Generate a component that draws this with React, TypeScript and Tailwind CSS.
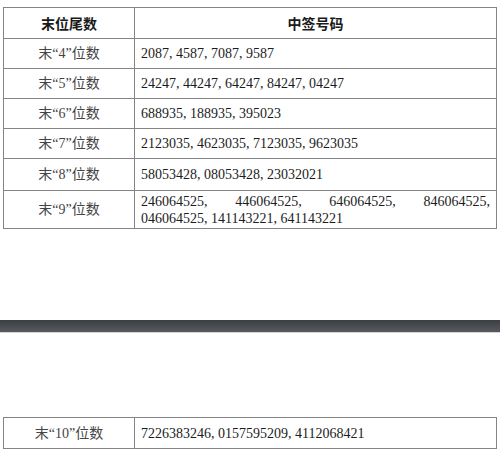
const rows: { label: string; nums: string; h: string }[] = [
  { label: '末“4”位数', nums: '2087, 4587, 7087, 9587', h: 'h-[30px]' },
  { label: '末“5”位数', nums: '24247, 44247, 64247, 84247, 04247', h: 'h-[30px]' },
  { label: '末“6”位数', nums: '688935, 188935, 395023', h: 'h-[30px]' },
  { label: '末“7”位数', nums: '2123035, 4623035, 7123035, 9623035', h: 'h-[30px]' },
  { label: '末“8”位数', nums: '58053428, 08053428, 23032021', h: 'h-[32px]' },
];

const serif = "font-['Liberation_Serif','Noto_Sans_CJK_SC',serif]";

function Row({ label, h, children, last }: { label: string; h: string; children: React.ReactNode; last?: boolean }) {
  return (
    <div className={`flex ${h} ${last ? '' : 'border-b border-[#858585]'}`}>
      <div className={`flex w-[131px] shrink-0 items-center justify-center border-r border-[#858585] text-[14px] text-[#444] ${serif}`}>
        {label}
      </div>
      <div className={`flex flex-1 items-center px-[6px] text-[14px] text-[#1c1c1c] ${serif}`}>{children}</div>
    </div>
  );
}

export default function App() {
  return (
    <div className="h-[450px] w-[500px] overflow-hidden bg-white">
      <div className="ml-[3px] mt-[7px] w-[494px] border border-[#858585]">
        <div className="flex h-[31px] border-b border-[#858585] font-['Noto_Sans_CJK_SC',sans-serif] text-[14px] font-bold text-[#1a1a1a]">
          <div className="flex w-[131px] shrink-0 items-center justify-center border-r border-[#858585]">末位尾数</div>
          <div className="flex flex-1 items-center justify-center">中签号码</div>
        </div>
        {rows.map((r) => (
          <Row key={r.label} label={r.label} h={r.h}>
            {r.nums}
          </Row>
        ))}
        <Row label="末“9”位数" h="h-[37px]" last>
          <div className="flex w-full flex-col leading-[17px]">
            <div className="flex justify-between">
              <span>246064525,</span>
              <span>446064525,</span>
              <span>646064525,</span>
              <span>846064525,</span>
            </div>
            <div>046064525, 141143221, 641143221</div>
          </div>
        </Row>
      </div>

      <div className="mt-[91px] h-[13px] w-full border-b border-[#d4d4d4] bg-gradient-to-b from-[#3c3f42] to-[#565a5e]" />

      <div className="ml-[3px] mt-[84px] w-[494px] border border-[#858585]">
        <Row label="末“10”位数" h="h-[30px]" last>
          7226383246, 0157595209, 4112068421
        </Row>
      </div>
    </div>
  );
}
